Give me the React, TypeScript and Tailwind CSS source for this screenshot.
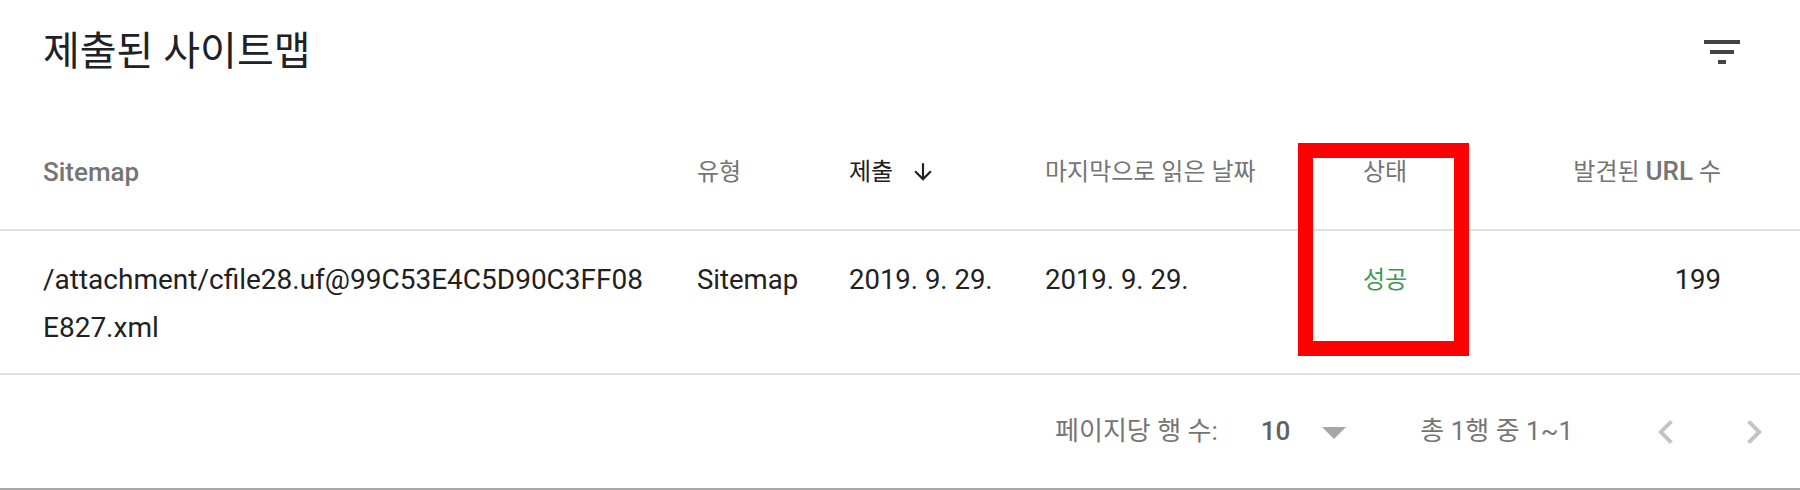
import React from "react";

// ─── Icons ─────────────────────────────────────────────────────────────────────

const FilterIcon = () => (
  <svg width="48" height="48" viewBox="0 0 24 24" className="text-[#444444]">
    <path fill="currentColor" d="M3 6h18v2H3zM6 11h12v2H6zM10 16h4v2h-4z" />
  </svg>
);

const ArrowDown = () => (
  <svg width="26" height="26" viewBox="0 0 24 24" className="text-[#212121]">
    <path fill="currentColor" d="M20 12l-1.41-1.41L13 16.17V4h-2v12.17l-5.58-5.59L4 12l8 8 8-8z" />
  </svg>
);

const ChevronLeft = () => (
  <svg width="48" height="48" viewBox="0 0 24 24" className="text-[#c4c4c4]">
    <path fill="currentColor" d="M15.41 7.41L14 6l-6 6 6 6 1.41-1.41L10.83 12z" />
  </svg>
);

const ChevronRight = () => (
  <svg width="48" height="48" viewBox="0 0 24 24" className="text-[#c4c4c4]">
    <path fill="currentColor" d="M10 6L8.59 7.41 13.17 12l-4.58 4.59L10 18l6-6z" />
  </svg>
);

const DropTriangle = () => (
  <svg width="24" height="12" viewBox="0 0 24 12" className="text-[#a6a6a6]">
    <path fill="currentColor" d="M0 0h24L12 12z" />
  </svg>
);

// ─── Page ──────────────────────────────────────────────────────────────────────

export default function App() {
  return (
    <div
      className="relative w-full h-[490px] bg-white overflow-hidden"
      style={{ fontFamily: 'Roboto, "Noto Sans CJK KR", sans-serif' }}
    >
      {/* title bar */}
      <div className="flex items-center justify-between h-[104px] pl-[43px] pr-[54px]">
        <h1 className="text-[40px] leading-none text-[#202124]">제출된 사이트맵</h1>
        <FilterIcon />
      </div>

      {/* table header */}
      <div className="flex items-center h-[127px] pt-[10px] pl-[43px] pr-[79px] border-b-2 border-[#e0e0e0] text-[#757575] font-medium leading-[32px]">
        <div className="w-[654px] text-[26px]">Sitemap</div>
        <div className="w-[152px] text-[24px] font-normal">유형</div>
        <div className="w-[196px] flex items-center gap-[17px] text-[#212121]">
          <span className="text-[24px] font-normal">제출</span>
          <ArrowDown />
        </div>
        <div className="w-[255px] text-[24px] font-normal">마지막으로 읽은 날짜</div>
        <div className="w-[170px] text-center text-[24px] font-normal">상태</div>
        <div className="flex-1 text-right text-[24px] font-normal">
          발견된 <span className="text-[26px] font-medium">URL</span> 수
        </div>
      </div>

      {/* table row */}
      <div className="flex items-start h-[144px] pt-[25px] pl-[43px] pr-[79px] border-b-2 border-[#e0e0e0] text-[27.5px] leading-[48px] text-[#212121]">
        <div className="w-[654px]">
          <div className="w-[608px] break-all text-[28px]">/attachment/cfile28.uf@99C53E4C5D90C3FF08E827.xml</div>
        </div>
        <div className="w-[152px]">Sitemap</div>
        <div className="w-[196px]">2019. 9. 29.</div>
        <div className="w-[255px]">2019. 9. 29.</div>
        <div className="w-[170px] text-center text-[24px] text-[#3c9a4f]">성공</div>
        <div className="flex-1 text-right">199</div>
      </div>

      {/* pagination */}
      <div className="flex items-center justify-end h-[115px] pr-[22px] border-b-2 border-[#a8a8a8] text-[#757575]">
        <span className="text-[26px]">페이지당 행 수:</span>
        <span className="ml-[43px] text-[26px] font-medium text-[#616161]">10</span>
        <span className="ml-[32px] mt-[2px]">
          <DropTriangle />
        </span>
        <span className="ml-[74px] text-[26px]">총 1행 중 1~1</span>
        <span className="ml-[69px]">
          <ChevronLeft />
        </span>
        <span className="ml-[40px]">
          <ChevronRight />
        </span>
      </div>

      {/* highlight box drawn over the status column */}
      <div className="absolute left-[1298px] top-[143px] w-[171px] h-[213px] border-[15px] border-[#ff0000] pointer-events-none" />
    </div>
  );
}
